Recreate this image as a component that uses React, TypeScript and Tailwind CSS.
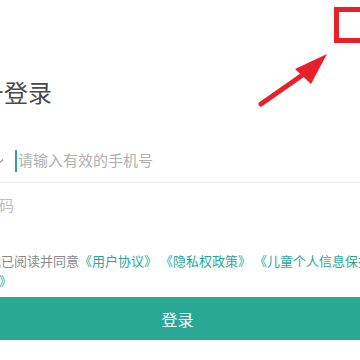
import React from "react";

export default function App() {
  return (
    <div
      className="relative w-[360px] h-[360px] overflow-hidden bg-white"
      style={{ fontFamily: '"Noto Sans CJK SC", "Noto Sans", sans-serif' }}
    >
      <div className="ml-[-14px] w-[383px] flex flex-col pt-[80px]">
        {/* Title */}
        <div className="ml-[-54px] text-[24px] leading-[24px] text-[#4a4a4a] whitespace-nowrap">
          手机号登录
        </div>

        {/* Phone row */}
        <div className="mt-[35px] h-[44px] flex items-center border-b border-[#ececec]">
          <div className="ml-[-30px] w-[48px] flex items-center justify-between text-[15px] text-[#333]">
            <span>+86</span>
            <svg width="8" height="6" viewBox="0 0 8 6" className="text-[#999]">
              <path d="M1 1.5 L4 4.5 L7 1.5" fill="none" stroke="currentColor" strokeWidth="1.2" />
            </svg>
          </div>
          <span className="ml-[11px] w-[2px] h-[22px] bg-[#2aa897]" />
          <span className="ml-[1px] text-[15px] text-[#b0b0b0] whitespace-nowrap">
            请输入有效的手机号
          </span>
        </div>

        {/* Code row */}
        <div className="h-[44px] flex items-center">
          <span className="ml-[-62px] text-[15px] text-[#bdbdbd] whitespace-nowrap">
            请输入验证码
          </span>
        </div>

        {/* Agreement */}
        <div className="mt-[24px] text-[13px] leading-[20px] whitespace-nowrap">
          <div className="ml-[2px]">
            <span className="text-[#8a8a8a]">我已阅读并同意</span>
            <span className="text-[#2aa897]">《用户协议》</span>{" "}
            <span className="text-[#2aa897]">《隐私权政策》</span>{" "}
            <span className="text-[#2aa897]">《儿童个人信息保护政</span>
          </div>
          <div className="text-[#2aa897]">策》</div>
        </div>

        {/* Button */}
        <button className="mt-[6px] h-[43px] w-full bg-[#2aa896] text-white text-[16px] flex items-center justify-center">
          登录
        </button>
      </div>

      {/* Annotation overlay */}
      <div className="absolute left-[334px] top-[7px] w-[40px] h-[36px] border-[5px] border-[#e8202a]" />
      <svg className="absolute left-0 top-0" width="360" height="360" viewBox="0 0 360 360">
        <line x1="261" y1="104" x2="304" y2="74" stroke="#e8202a" strokeWidth="5" strokeLinecap="round" />
        <polygon points="327,54 295,69 311,84" fill="#e8202a" />
      </svg>
    </div>
  );
}
